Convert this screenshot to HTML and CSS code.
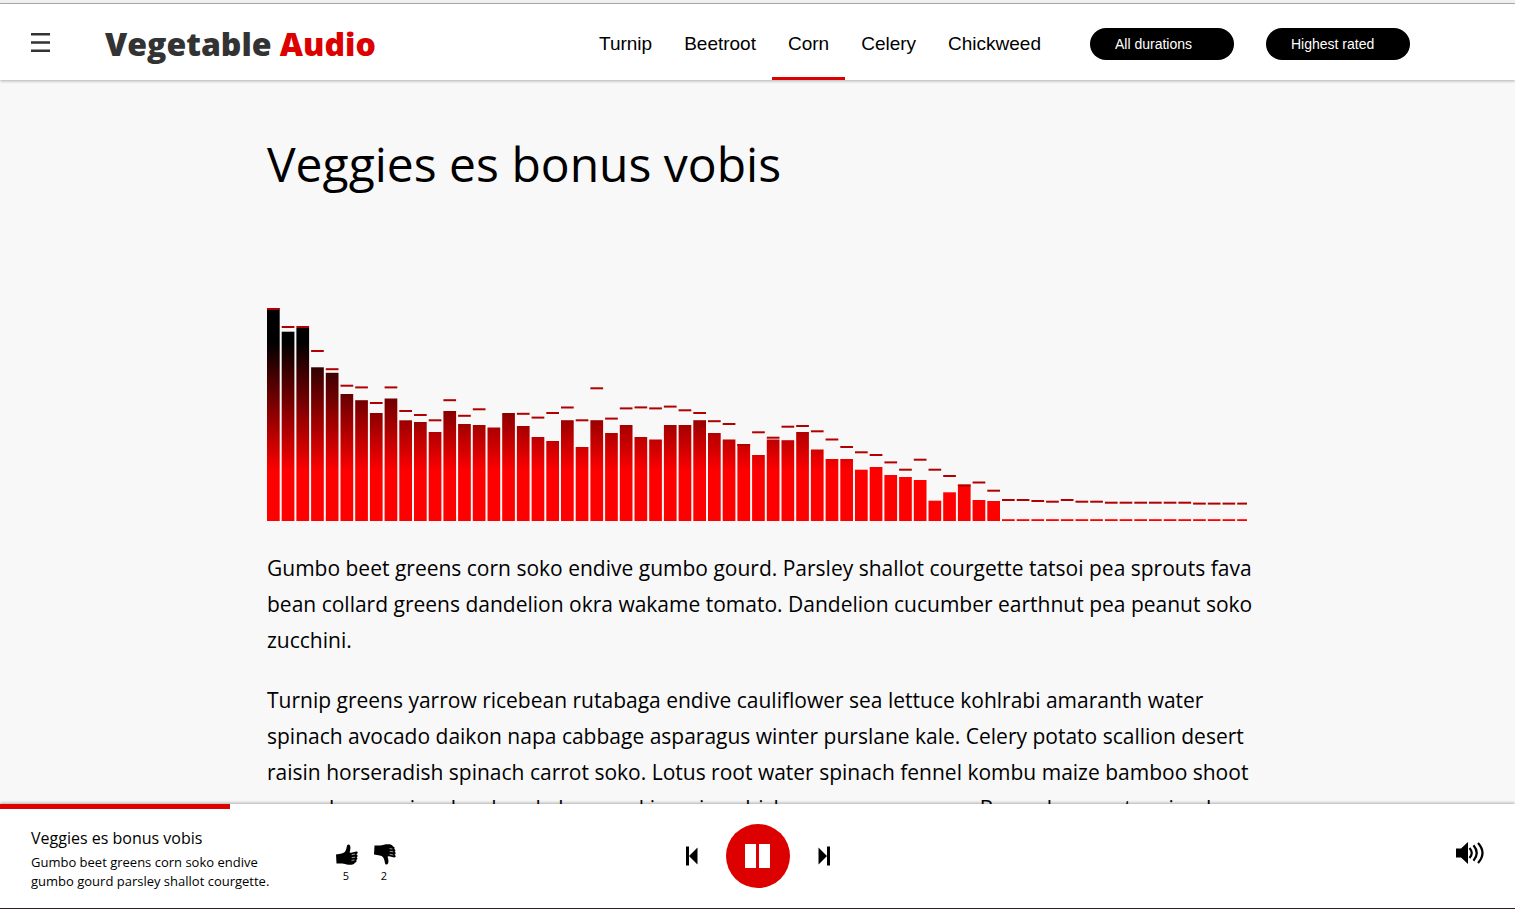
FILE: index.html
```html
<!DOCTYPE html>
<html lang="en">
<head>
  <meta charset="utf-8">
  <meta name="viewport" content="width=device-width, initial-scale=1">
  <title>Vegetable Audio</title>
  <link rel="stylesheet" href="styles.css">
</head>
<body>
  <div class="top-edge"></div>
  <header class="header">
    <button class="icon-button menu-button" type="button" aria-label="Menu">
      <svg width="20" height="22" viewBox="0 0 20 22" fill="#333"><path d="M0 0h19v2.400H0zM0 8.300h19v2.400H0zM0 16.600h19V19H0z"/></svg>
    </button>
    <a class="logo" href="#">Vegetable <span class="logo-accent">Audio</span></a>
    <nav class="nav">
      <a class="nav-link" href="#">Turnip</a>
      <a class="nav-link" href="#">Beetroot</a>
      <a class="nav-link nav-link-active" href="#" aria-current="page">Corn</a>
      <a class="nav-link" href="#">Celery</a>
      <a class="nav-link" href="#">Chickweed</a>
    </nav>
    <div class="filters">
      <select class="filter" aria-label="Duration"><option>All durations</option></select>
      <select class="filter" aria-label="Sort order"><option>Highest rated</option></select>
    </div>
  </header>

  <main class="main">
    <article class="article">
      <h1 class="title">Veggies es bonus vobis</h1>
      <svg class="spectrum" viewBox="0 0 980 213" role="img" aria-label="Audio spectrum">
        <defs>
          <linearGradient id="level" gradientUnits="userSpaceOnUse" x1="0" y1="0" x2="0" y2="213">
            <stop offset="0.16" stop-color="#000"/>
            <stop offset="0.77" stop-color="#f00"/>
          </linearGradient>
        </defs>
        <g class="levels" fill="url(#level)"></g>
        <g class="peaks"></g>
      </svg>
      <p class="text">Gumbo beet greens corn soko endive gumbo gourd. Parsley shallot courgette tatsoi pea sprouts fava bean collard greens dandelion okra wakame tomato. Dandelion cucumber earthnut pea peanut soko zucchini.</p>
      <p class="text">Turnip greens yarrow ricebean rutabaga endive cauliflower sea lettuce kohlrabi amaranth water spinach avocado daikon napa cabbage asparagus winter purslane kale. Celery potato scallion desert raisin horseradish spinach carrot soko. Lotus root water spinach fennel kombu maize bamboo shoot green bean swiss chard seakale pumpkin onion chickpea gram corn pea. Brussels sprout coriander water chestnut gourd swiss chard wakame kohlrabi beetroot carrot watercress.</p>
    </article>
  </main>

  <footer class="player">
    <div class="progress"><div class="progress-value" style="width: 15.2%"></div></div>
    <div class="player-body">
      <div class="track">
        <div class="track-info">
          <div class="track-title">Veggies es bonus vobis</div>
          <div class="track-text">Gumbo beet greens corn soko endive gumbo gourd parsley shallot courgette.</div>
        </div>
        <div class="votes">
          <button class="icon-button vote" type="button" aria-label="Like, 5">
            <svg width="24" height="22" viewBox="-2 0 24 22"><path d="M0 10.400C4.500 9.800 7.600 9.400 9 7.800C10.600 5.900 10.500 3 11.300 1.100C12 0 13.500.3 14 1.400C14.900 3.500 14.300 6 13.600 8.600L15 8.800L20.200 7.500C22 7.300 22.200 9.500 20.700 10L20.400 10.500C22 10.700 22 12.900 20.500 13.300C21.900 13.700 21.600 15.700 20.100 16C21.100 16.600 20.500 18.300 19 18.500C18.500 20.500 15.500 21 12.500 20.700C9.500 20.400 8 19.300 5.500 19.500H.5Z"/><path d="M15.700 10.800l3.500-.8M15.700 13.700l3.500-.5M15.500 16.400l3-.4" stroke="#fff" stroke-width=".6"/></svg>
            <span>5</span>
          </button>
          <button class="icon-button vote" type="button" aria-label="Dislike, 2">
            <svg width="24" height="22" viewBox="-2 0 24 22"><g transform="matrix(1 0 0 -1 0 21)"><path d="M0 10.400C4.500 9.800 7.600 9.400 9 7.800C10.600 5.900 10.500 3 11.300 1.100C12 0 13.500.3 14 1.400C14.900 3.500 14.300 6 13.600 8.600L15 8.800L20.200 7.500C22 7.300 22.200 9.500 20.700 10L20.400 10.500C22 10.700 22 12.900 20.500 13.300C21.900 13.700 21.600 15.700 20.100 16C21.100 16.600 20.500 18.300 19 18.500C18.500 20.500 15.500 21 12.500 20.700C9.500 20.400 8 19.300 5.500 19.500H.5Z"/><path d="M15.700 10.800l3.500-.8M15.700 13.700l3.500-.5M15.500 16.400l3-.4" stroke="#fff" stroke-width=".6"/></g></svg>
            <span>2</span>
          </button>
        </div>
      </div>
      <div class="controls">
        <button class="icon-button" type="button" aria-label="Previous">
          <svg width="12" height="20" viewBox="0 0 12 20"><path d="M0 .5h3V19.500H0zM11.500 1.500v17L3 10z"/></svg>
        </button>
        <button class="icon-button play-button" type="button" aria-label="Pause">
          <svg width="25" height="24" viewBox="0 0 25 24" fill="#fff"><path d="M0 0h11v24H0zM14 0h11v24H14z"/></svg>
        </button>
        <button class="icon-button" type="button" aria-label="Next">
          <svg width="12" height="20" viewBox="0 0 12 20"><path d="M9 .5h3V19.500H9zM.5 1.500v17L9 10z"/></svg>
        </button>
      </div>
      <button class="icon-button volume-button" type="button" aria-label="Volume">
        <svg width="28" height="22" viewBox="0 0 28 22"><path d="M0 6.500H5L12 0V22L5 15.500H0z"/><g fill="none" stroke="#000" stroke-width="2.200"><path d="M13.500 6Q18 11 13.500 16"/><path d="M17.500 3.300Q24 11 17.500 18.700"/><path d="M22 1Q31 11 22 21"/></g></svg>
      </button>
    </div>
  </footer>
  <div class="bottom-edge"></div>
  <script src="spectrum.js"></script>
</body>
</html>
```
FILE: styles.css
```css
* { box-sizing: border-box; }

body {
  margin: 0;
  height: 100vh;
  display: flex;
  flex-direction: column;
  overflow: hidden;
  background: #f8f8f8;
  color: #000;
  font-family: "Open Sans", sans-serif;
}

.top-edge {
  flex: none;
  height: 4px;
  background: #f2f1f2;
  border-bottom: 1px solid #b3b0b2;
}

.bottom-edge {
  flex: none;
  height: 1px;
  background: #3c1a1a;
}

.icon-button {
  display: flex;
  align-items: center;
  justify-content: center;
  padding: 0;
  border: 0;
  background: none;
  color: inherit;
  font: inherit;
  cursor: pointer;
}

.header {
  flex: none;
  position: relative;
  z-index: 1;
  display: flex;
  align-items: stretch;
  height: 76px;
  padding: 4px 105px 0 31px;
  background: #fff;
  box-shadow: 0 1px 3px rgba(0, 0, 0, 0.3);
}

.menu-button {
  width: 74px;
  justify-content: flex-start;
}

.logo {
  align-self: center;
  color: #333;
  font-size: 32px;
  font-weight: 800;
  line-height: 44px;
  text-decoration: none;
  white-space: nowrap;
}

.logo-accent { color: #d00; }

.nav {
  display: flex;
  margin-left: auto;
  font-family: "Liberation Sans", Arial, sans-serif;
  font-size: 19px;
}

.nav-link {
  display: flex;
  align-items: center;
  padding: 3px 16px 0;
  border-bottom: 3px solid transparent;
  color: #000;
  text-decoration: none;
}

.nav-link-active { border-bottom-color: #d00; }

.filters {
  display: flex;
  align-items: center;
  gap: 32px;
  margin-left: 33px;
}

.filter {
  appearance: none;
  width: 144px;
  height: 32px;
  padding: 0 25px;
  border: 0;
  border-radius: 16px;
  background: #000;
  color: #fff;
  font-family: "Liberation Sans", Arial, sans-serif;
  font-size: 14px;
}

.main {
  flex: 1;
  min-height: 0;
  overflow-y: auto;
  scrollbar-width: none;
}

.article {
  max-width: 981px;
  margin: 0 auto;
  padding-top: 52px;
}

.title {
  margin: 0 0 112px;
  font-size: 48px;
  font-weight: 400;
  line-height: 64px;
}

.spectrum {
  display: block;
  width: 100%;
  max-width: 980px;
  margin-bottom: 29px;
}

.peaks { fill: #b00000; }

.text {
  margin: 0 -8px 24px 0;
  font-size: 21px;
  line-height: 36px;
}

.player {
  flex: none;
  position: relative;
  z-index: 1;
  background: #fff;
  box-shadow: 0 -1px 3px rgba(0, 0, 0, 0.3);
}

.progress { height: 5px; }

.progress-value {
  height: 100%;
  background: #d00;
}

.player-body {
  display: grid;
  grid-template-columns: 1fr auto 1fr;
  align-items: center;
  height: 99px;
  padding: 0 31px;
}

.track {
  display: flex;
  align-items: center;
  gap: 63px;
}

.track-info { width: 240px; }

.track-title {
  font-size: 16px;
  line-height: 24px;
}

.track-text {
  margin-top: 3px;
  font-size: 13px;
  line-height: 19px;
}

.votes {
  display: flex;
  gap: 14px;
  padding-top: 10px;
}

.vote {
  flex-direction: column;
  gap: 2px;
  font-size: 11px;
  line-height: 16px;
}

.controls {
  display: flex;
  align-items: center;
  gap: 28px;
  padding-bottom: 6px;
}

.play-button {
  width: 64px;
  height: 64px;
  border-radius: 50%;
  background: #d00;
}

.volume-button {
  justify-self: end;
  padding-bottom: 12px;
}
```
FILE: spectrum.js
```js
const HEIGHT = 213;
const STEP = 14.7;
const BAR = 12.7;

// Distance from the top of the chart to each bar's top edge.
const levels = [
  0.5, 23.7, 20, 59.3, 64.8, 86, 92.2, 105, 90.5, 112.3, 114, 124, 103, 116, 117, 119.5, 105,
  118, 129, 133, 112.2, 139, 112.2, 125, 117, 129, 131.5, 117, 117, 112.2, 125, 131.5, 136, 147,
  131.5, 132.2, 124, 141.5, 151, 151, 161.7, 159, 167, 169, 172, 192.7, 184.3, 176.6, 192, 193
];

// Distance from the top of the chart to the middle of each peak marker.
const peaks = [
  1, 19, 19, 43, 61.2, 77.7, 79.4, 95, 79.4, 103, 107, 112.3, 92.2, 107.8, 101.3, 121, 106,
  105.8, 109.6, 105, 99.5, 112.3, 80.3, 110.6, 100.4, 99.4, 100.4, 98.6, 102.3, 105, 113.2, 116, 137, 124.3,
  129.7, 118.7, 118, 123.3, 131.5, 139, 144.3, 147, 154.4, 161.7, 151.7, 161.7, 168, 177.5, 174.5, 182.7,
  192, 192, 193, 193.7, 192, 193.7, 193.7, 194.7, 194.7, 194.7, 194.7, 194.7, 194.7, 195.6, 195.6, 195.6, 195.6
];

function addRect(group, x, y, height) {
  const rect = document.createElementNS("http://www.w3.org/2000/svg", "rect");
  rect.setAttribute("x", x);
  rect.setAttribute("y", y);
  rect.setAttribute("width", BAR);
  rect.setAttribute("height", height);
  group.append(rect);
}

const levelGroup = document.querySelector(".levels");
const peakGroup = document.querySelector(".peaks");

peaks.forEach((peak, i) => {
  const top = levels[i] ?? HEIGHT - 1.8;
  addRect(levelGroup, i * STEP, top, HEIGHT - top);
  if (i !== 15 && i !== 16) addRect(peakGroup, i * STEP, peak - 1, 2);
});
```
